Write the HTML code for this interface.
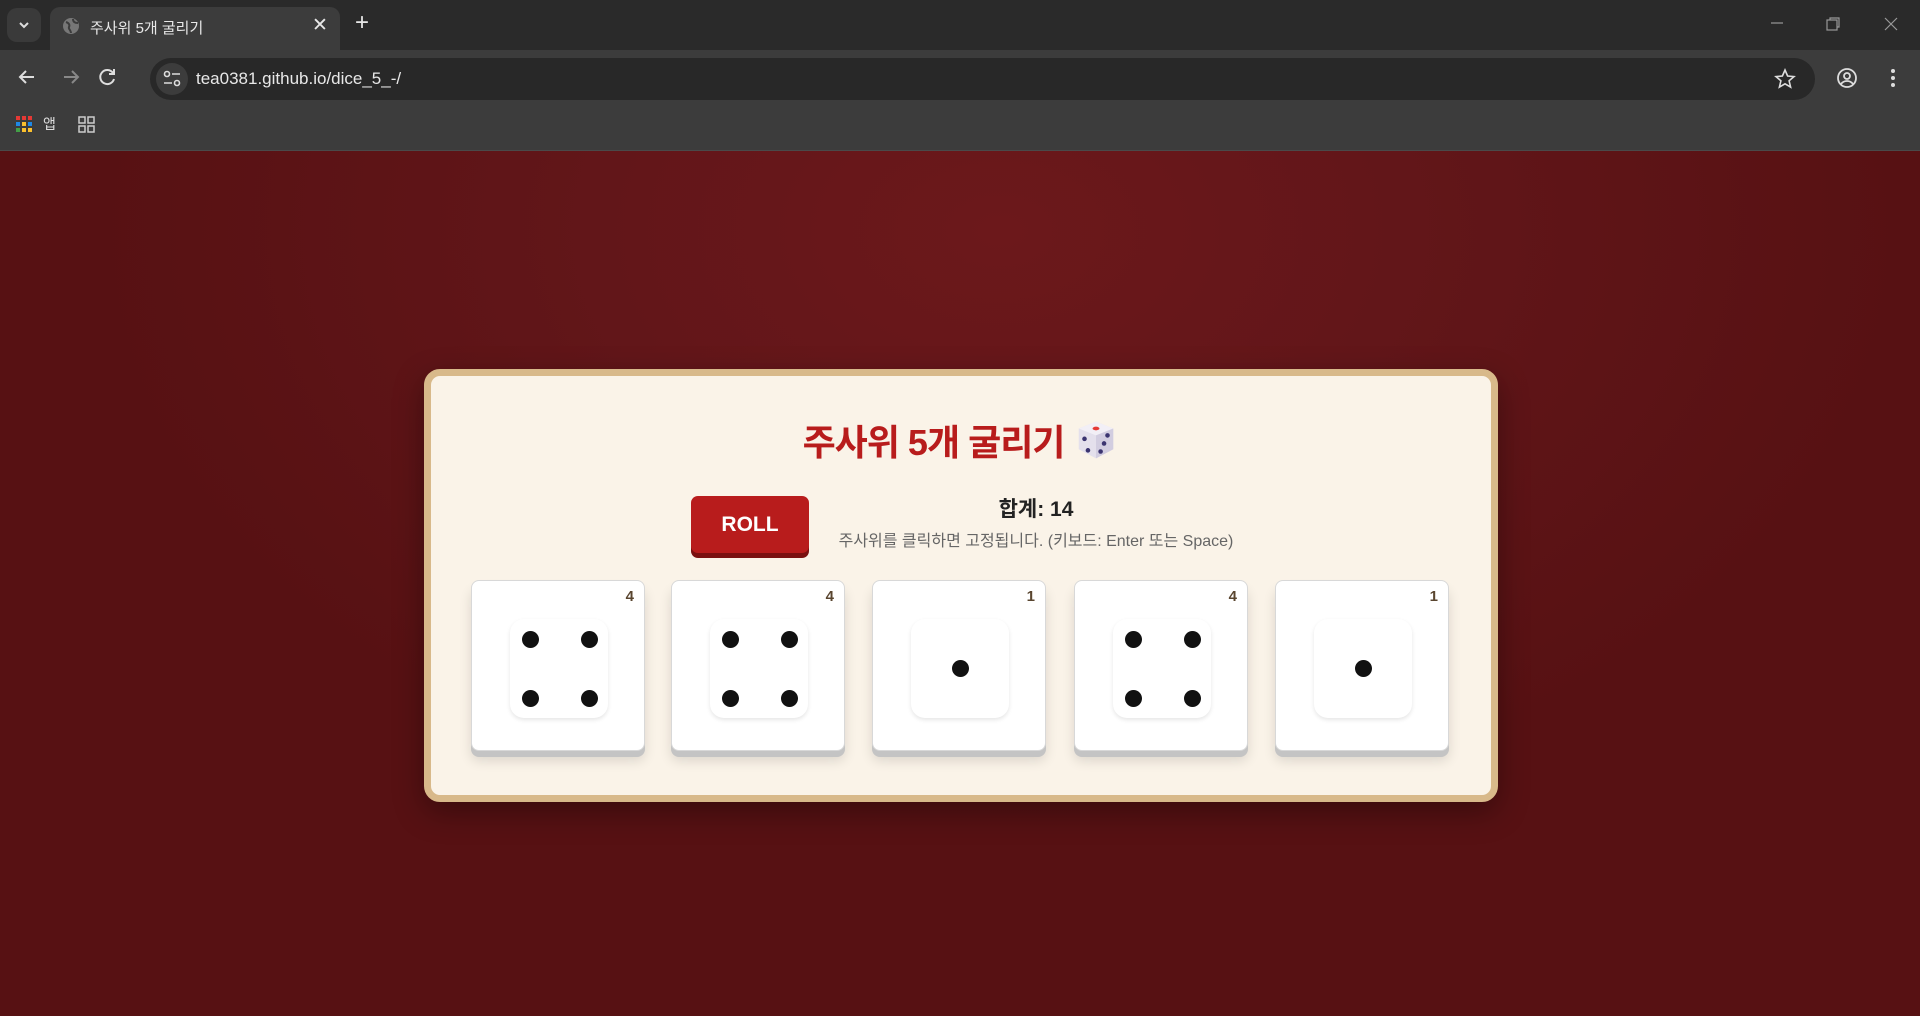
<!DOCTYPE html>
<html><head><meta charset="utf-8">
<style>
*{box-sizing:border-box;margin:0;padding:0}
body{width:1920px;height:1016px;overflow:hidden;font-family:"Liberation Sans","Noto Sans CJK KR",sans-serif;background:#5a1214;position:relative}
.tabs{position:absolute;left:0;top:0;width:1920px;height:50px;background:#2a2a2a}
.tbtn{position:absolute;left:7px;top:8px;width:34px;height:34px;border-radius:10px;background:#3a3a3a}
.tab{position:absolute;left:50px;top:7px;width:290px;height:43px;background:#3c3c3c;border-radius:10px 10px 0 0;color:#e8e8e8;font-size:15px}
.toolbar{position:absolute;left:0;top:50px;width:1920px;height:50px;background:#3c3c3c}
.url{position:absolute;left:150px;top:8px;width:1665px;height:42px;border-radius:21px;background:#282828;color:#e8e8e8;font-size:17px}
.bm{position:absolute;left:0;top:100px;width:1920px;height:51px;background:#3c3c3c;border-bottom:1px solid #4a4a4a}
.page{position:absolute;left:0;top:151px;width:1920px;height:865px;background:radial-gradient(ellipse 900px 600px at 1000px 80px,#6c181b 0%,#621619 45%,#571113 100%)}
.card{position:absolute;left:424px;top:369px;width:1074px;height:433px;background:#faf3e8;border:7px solid #d8b98a;border-radius:16px;box-shadow:0 10px 30px rgba(0,0,0,.35)}
.title{position:absolute;left:0;right:0;top:38px;text-align:center;font-size:36px;font-weight:bold;color:#b81c1c;letter-spacing:-1px}
.roll{position:absolute;left:260px;top:120px;width:118px;height:57px;background:#b81c1c;border-radius:7px;box-shadow:0 5px 0 #7a1010;color:#fff;font-weight:bold;font-size:21px;text-align:center;line-height:58px}
.sum{position:absolute;left:480px;width:250px;top:117px;text-align:center;font-size:21px;font-weight:bold;color:#222}
.hint{position:absolute;left:380px;width:450px;top:151px;text-align:center;font-size:16px;color:#666}
.die{position:absolute;top:204px;width:174px;height:171px;background:#fff;border-radius:8px;border:1px solid #d8d8d8;box-shadow:0 6px 0 #c4c4c4,0 10px 12px rgba(0,0,0,.12)}
.num{position:absolute;right:10px;top:7px;font-size:15px;font-weight:bold;color:#5a4630}
.face{position:absolute;left:38px;top:38px;width:98px;height:99px;border-radius:14px;background:#fff;box-shadow:0 2px 4px rgba(0,0,0,.1)}
.pip{position:absolute;width:17px;height:17px;border-radius:50%;background:#111}
</style></head><body>
<div class="tabs">
 <div class="tbtn"><svg width="34" height="34"><path d="M13 15l4 4 4-4" stroke="#ddd" stroke-width="2" fill="none"/></svg></div>
 <div class="tab">
  <svg style="position:absolute;left:11px;top:9px" width="20" height="20"><circle cx="10" cy="10" r="8" fill="#777"/><path d="M5 6c3 1 4 3 3 5s2 3 2 6M12 3c0 3 2 4 5 4" stroke="#3c3c3c" stroke-width="2" fill="none"/></svg>
  <span style="position:absolute;left:40px;top:10px">주사위 5개 굴리기</span>
  <span style="position:absolute;left:262px;top:7px;font-size:19px">✕</span>
 </div>
 <span style="position:absolute;left:355px;top:9px;color:#e8e8e8;font-size:24px">+</span>
 <svg style="position:absolute;left:1765px;top:15px" width="150" height="20"><path d="M6 8h12" stroke="#999" stroke-width="1.2"/><rect x="62" y="5" width="10" height="10" fill="none" stroke="#999" stroke-width="1.2"/><path d="M65 5V3h9v9h-2" fill="none" stroke="#999" stroke-width="1.2"/><path d="M120 3l12 12M132 3l-12 12" stroke="#999" stroke-width="1.2"/></svg>
</div>
<div class="toolbar">
 <svg style="position:absolute;left:14px;top:15px" width="110" height="24"><path d="M20 12H6m6-6l-6 6 6 6" stroke="#ddd" stroke-width="2" fill="none"/><path d="M50 12h14m-6-6l6 6-6 6" stroke="#888" stroke-width="2" fill="none"/><path d="M99 8a7 7 0 1 0 1 6M100 4v5h-5" stroke="#ddd" stroke-width="2" fill="none"/></svg>
 <div class="url">
  <div style="position:absolute;left:6px;top:5px;width:32px;height:32px;border-radius:50%;background:#3c3c3c"></div>
  <svg style="position:absolute;left:12px;top:11px" width="20" height="20"><circle cx="5" cy="5" r="2.5" fill="none" stroke="#ddd" stroke-width="1.6"/><path d="M10 5h8M2 14h8" stroke="#ddd" stroke-width="1.6"/><circle cx="15" cy="14" r="2.5" fill="none" stroke="#ddd" stroke-width="1.6"/></svg>
  <span style="position:absolute;left:46px;top:11px">tea0381.github.io/dice_5_-/</span>
  <svg style="position:absolute;left:1624px;top:10px" width="22" height="22"><path d="M11 2l2.6 6 6.4.6-4.9 4.2 1.5 6.3L11 15.8 5.4 19.1l1.5-6.3L2 8.6 8.4 8z" fill="none" stroke="#ddd" stroke-width="1.6"/></svg>
 </div>
 <svg style="position:absolute;left:1834px;top:16px" width="80" height="24"><circle cx="13" cy="12" r="9" fill="none" stroke="#ddd" stroke-width="1.8"/><circle cx="13" cy="10" r="3" fill="none" stroke="#ddd" stroke-width="1.8"/><path d="M7 18c3-4 9-4 12 0" stroke="#ddd" stroke-width="1.8" fill="none"/><circle cx="59" cy="5" r="2" fill="#ddd"/><circle cx="59" cy="12" r="2" fill="#ddd"/><circle cx="59" cy="19" r="2" fill="#ddd"/></svg>
</div>
<div class="bm">
 <svg style="position:absolute;left:16px;top:16px" width="18" height="18">
  <rect x="0" y="0" width="4" height="4" fill="#e53935"/><rect x="6" y="0" width="4" height="4" fill="#e53935"/><rect x="12" y="0" width="4" height="4" fill="#e53935"/>
  <rect x="0" y="6" width="4" height="4" fill="#1e88e5"/><rect x="6" y="6" width="4" height="4" fill="#fbc02d"/><rect x="12" y="6" width="4" height="4" fill="#1e88e5"/>
  <rect x="0" y="12" width="4" height="4" fill="#43a047"/><rect x="6" y="12" width="4" height="4" fill="#fbc02d"/><rect x="12" y="12" width="4" height="4" fill="#fbc02d"/></svg>
 <span style="position:absolute;left:43px;top:14px;color:#ddd;font-size:14px">앱</span>
 <svg style="position:absolute;left:78px;top:16px" width="18" height="18"><rect x="1" y="1" width="6" height="6" fill="none" stroke="#ccc" stroke-width="1.5"/><rect x="10" y="1" width="6" height="6" fill="none" stroke="#ccc" stroke-width="1.5"/><rect x="1" y="10" width="6" height="6" fill="none" stroke="#ccc" stroke-width="1.5"/><rect x="10" y="10" width="6" height="6" fill="none" stroke="#ccc" stroke-width="1.5"/></svg>
</div>
<div class="page"></div>
<div class="card">
 <div class="title">주사위 5개 굴리기 <svg width="46" height="46" viewBox="0 0 40 40" style="vertical-align:-8px"><path d="M20 4l15 6v18l-15 8-15-8V10z" fill="#e4e0ec"/><path d="M20 4l15 6-15 6-15-6z" fill="#f2eff6"/><path d="M20 16v20l15-8V10z" fill="#d2cde0"/><ellipse cx="20" cy="10" rx="3" ry="1.6" fill="#e53935"/><circle cx="10" cy="19" r="2" fill="#3b3470"/><circle cx="13" cy="29" r="2" fill="#3b3470"/><circle cx="30" cy="16" r="2" fill="#3b3470"/><circle cx="27" cy="23" r="2" fill="#3b3470"/><circle cx="24" cy="30" r="2" fill="#3b3470"/></svg></div>
 <div class="roll">ROLL</div>
 <div class="sum">합계: 14</div>
 <div class="hint">주사위를 클릭하면 고정됩니다. (키보드: Enter 또는 Space)</div>

 <div class="die" style="left:40px"><div class="num">4</div><div class="face">
  <div class="pip" style="left:12px;top:12px"></div><div class="pip" style="left:71px;top:12px"></div><div class="pip" style="left:12px;top:71px"></div><div class="pip" style="left:71px;top:71px"></div></div></div>
 <div class="die" style="left:240px"><div class="num">4</div><div class="face">
  <div class="pip" style="left:12px;top:12px"></div><div class="pip" style="left:71px;top:12px"></div><div class="pip" style="left:12px;top:71px"></div><div class="pip" style="left:71px;top:71px"></div></div></div>
 <div class="die" style="left:441px"><div class="num">1</div><div class="face">
  <div class="pip" style="left:41px;top:41px"></div></div></div>
 <div class="die" style="left:643px"><div class="num">4</div><div class="face">
  <div class="pip" style="left:12px;top:12px"></div><div class="pip" style="left:71px;top:12px"></div><div class="pip" style="left:12px;top:71px"></div><div class="pip" style="left:71px;top:71px"></div></div></div>
 <div class="die" style="left:844px"><div class="num">1</div><div class="face">
  <div class="pip" style="left:41px;top:41px"></div></div></div>
</div>
</body></html>
